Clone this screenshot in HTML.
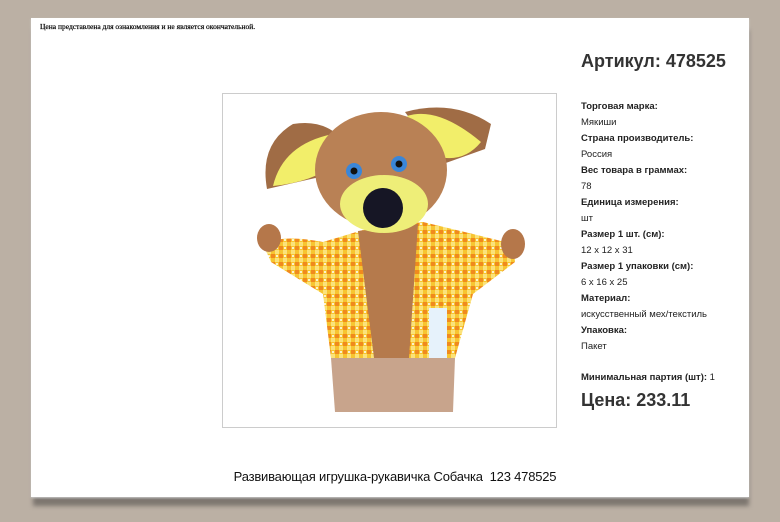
<!DOCTYPE html>
<html><head><meta charset="utf-8"><style>
body{margin:0;width:780px;height:522px;background:#bbb0a4;position:relative;overflow:hidden;font-family:"Liberation Sans",sans-serif;color:#222}
.shadow{position:absolute;left:33px;top:30px;width:716px;height:476px;background:#7d7670;filter:blur(2px)}
.panel{position:absolute;left:31px;top:18px;width:718px;height:479px;background:#fff;box-shadow:0 1px 2px #ccc}
.note{position:absolute;left:40px;top:22px;font:7.5px "Liberation Serif",serif;color:#000;-webkit-text-stroke:0.2px #000}
.art{position:absolute;left:581px;top:51px;font-weight:bold;font-size:18px;color:#333}
.props{position:absolute;left:581px;top:99px;font-size:9.5px;line-height:16px;color:#222}
.props b{font-weight:bold}
.min{position:absolute;left:581px;top:372px;font-size:9.5px}
.price{position:absolute;left:581px;top:390px;font-weight:bold;font-size:18px;color:#333}
.img{position:absolute;left:222px;top:93px;width:333px;height:333px;border:1px solid #ccc;background:#fff}
.title{position:absolute;left:5px;width:780px;top:469px;text-align:center;font-size:13px;color:#111;letter-spacing:-0.2px}
</style></head><body>
<div class="shadow"></div>
<div class="panel"></div>
<div class="note">Цена представлена для ознакомления и не является окончательной.</div>
<div class="art">Артикул: 478525</div>
<div class="props">
<b>Торговая марка:</b><br>Мякиши<br><b>Страна производитель:</b><br>Россия<br><b>Вес товара в граммах:</b><br>78<br><b>Единица измерения:</b><br>шт<br><b>Размер 1 шт. (см):</b><br>12 x 12 x 31<br><b>Размер 1 упаковки (см):</b><br>6 x 16 x 25<br><b>Материал:</b><br>искусственный мех/текстиль<br><b>Упаковка:</b><br>Пакет
</div>
<div class="min"><b>Минимальная партия (шт):</b> 1</div>
<div class="price">Цена: 233.11</div>
<div class="img">
<svg width="333" height="333" viewBox="0 0 333 333">
<defs><pattern id="ch" width="8" height="8" patternUnits="userSpaceOnUse"><rect width="8" height="8" fill="#f7c531"/><rect width="4" height="4" fill="#f08a1e"/><rect x="4" y="4" width="4" height="4" fill="#fbe27a"/><circle cx="6" cy="2" r="1" fill="#fff"/></pattern></defs>
<path d="M40 150 Q60 140 100 148 L140 136 L200 128 L250 140 L290 150 L292 168 L250 200 L232 264 L108 264 L100 200 L48 168 Z" fill="url(#ch)"/>
<ellipse cx="46" cy="144" rx="12" ry="14" fill="#b5774a"/>
<ellipse cx="290" cy="150" rx="12" ry="15" fill="#b5774a"/>
<path d="M135 137 L195 130 L186 264 L151 264 Z" fill="#b57a4c"/>
<rect x="206" y="214" width="18" height="50" fill="#e6f2fb"/>
<path d="M108 264 L232 264 L230 318 L112 318 Z" fill="#c8a48c"/>
<path d="M44 95 Q36 50 70 30 Q100 25 118 44 L110 80 Z" fill="#a06c45"/>
<path d="M50 92 Q60 50 110 40 L112 70 Q90 88 50 92Z" fill="#f2ee6a"/>
<path d="M182 18 Q230 5 268 30 L262 55 L220 70 Z" fill="#a06c45"/>
<path d="M184 22 Q215 12 258 48 Q240 70 212 62 Z" fill="#f2ee6a"/>
<ellipse cx="158" cy="76" rx="66" ry="58" fill="#b98155"/>
<ellipse cx="161" cy="110" rx="44" ry="29" fill="#eeee78"/>
<circle cx="160" cy="114" r="20" fill="#161625"/>
<circle cx="131" cy="77" r="8" fill="#3a86d8"/><circle cx="131" cy="77" r="3.5" fill="#111"/>
<circle cx="176" cy="70" r="8" fill="#3a86d8"/><circle cx="176" cy="70" r="3.5" fill="#111"/>
</svg>
</div>
<div class="title">Развивающая игрушка-рукавичка Собачка &nbsp;123 478525</div>
</body></html>
